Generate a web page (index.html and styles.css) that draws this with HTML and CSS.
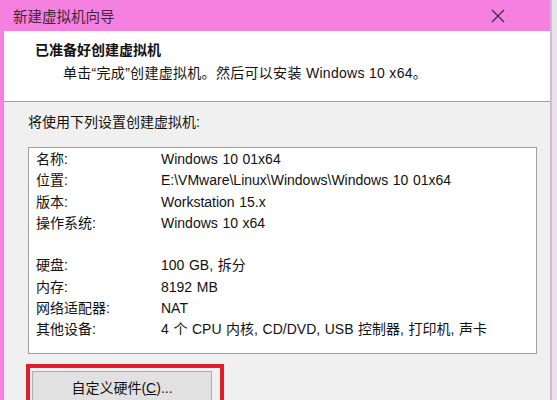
FILE: index.html
```html
<!DOCTYPE html>
<html lang="zh-CN">
<head>
    <meta charset="utf-8">
    <title>新建虚拟机向导</title>
    <meta name="viewport" content="width=device-width, initial-scale=1">
    <link rel="stylesheet" href="styles.css">
</head>
<body>
    <div class="window">
        <div class="titlebar">
            <span class="title">新建虚拟机向导</span>
            <span class="close">
                <svg width="14" height="14" viewBox="0 0 14 14">
                    <path d="M1 1 L13 13 M13 1 L1 13" stroke="#3a2a3a" stroke-width="1.2" fill="none"/>
                </svg>
            </span>
        </div>

        <div class="header">
            <div class="header-title">已准备好创建虚拟机</div>
            <div class="header-sub">单击“完成”创建虚拟机。然后可以安装 Windows 10 x64。</div>
        </div>

        <div class="content">
            <div class="prompt">将使用下列设置创建虚拟机:</div>

            <div class="summary">
                <div class="row"><span class="key">名称:</span><span class="val">Windows 10 01x64</span></div>
                <div class="row"><span class="key">位置:</span><span class="val">E:\VMware\Linux\Windows\Windows 10 01x64</span></div>
                <div class="row"><span class="key">版本:</span><span class="val">Workstation 15.x</span></div>
                <div class="row"><span class="key">操作系统:</span><span class="val">Windows 10 x64</span></div>
                <div class="row"></div>
                <div class="row"><span class="key">硬盘:</span><span class="val">100 GB, 拆分</span></div>
                <div class="row"><span class="key">内存:</span><span class="val">8192 MB</span></div>
                <div class="row"><span class="key">网络适配器:</span><span class="val">NAT</span></div>
                <div class="row"><span class="key">其他设备:</span><span class="val">4 个 CPU 内核, CD/DVD, USB 控制器, 打印机, 声卡</span></div>
            </div>

            <div class="highlight">
                <button class="btn">自定义硬件(<u>C</u>)...</button>
            </div>
        </div>
    </div>
</body>
</html>
```

FILE: styles.css
```css
:root {
    --pink: #f580e0;
    --panel: #f0f0f0;
    --line: #a0a0a0;
    --text: #111;
    --red: #de1f2b;
}

* {
    margin: 0;
    padding: 0;
    box-sizing: border-box;
}

body {
    width: 557px;
    height: 400px;
    overflow: hidden;
    background-color: #ecdff0;
    font-family: "Liberation Sans", "Noto Sans CJK SC", sans-serif;
    font-size: 14px;
    color: var(--text);
}

.window {
    width: 552px;
    height: 400px;
    border-left: 4px solid var(--pink);
    border-right: 2px solid #cbbfcd;
    background-color: var(--panel);
}

.titlebar {
    height: 31px;
    background-color: var(--pink);
    display: flex;
    align-items: center;
    justify-content: space-between;
    padding: 0 45px 0 9px;
}

.title {
    color: #3a2a38;
    font-size: 14.5px;
}

.close {
    display: flex;
}

.header {
    height: 71px;
    background-color: #fff;
    border-bottom: 1px solid var(--line);
    padding-top: 9px;
}

.header-title {
    font-weight: bold;
    line-height: 20px;
    padding-left: 31px;
}

.header-sub {
    line-height: 20px;
    margin-top: 3px;
    padding-left: 59px;
    letter-spacing: 0.3px;
}

.content {
    padding: 10px 13px 0 24px;
}

.prompt {
    line-height: 20px;
}

.summary {
    margin-top: 15px;
    background-color: #fff;
    border: 1px solid var(--line);
    padding: 1px 0 13px 7px;
}

.row {
    display: flex;
    height: 21.25px;
    line-height: 21.25px;
    white-space: nowrap;
}

.key {
    width: 125px;
}

.val {
    word-spacing: 0.7px;
}

.highlight {
    margin: 10px 0 0 -2px;
    width: 198px;
    border: 4px solid var(--red);
    border-bottom: none;
    padding: 3px 8px 0 2px;
}

.btn {
    width: 100%;
    height: 32px;
    background-color: #e1e1e1;
    border: 1px solid #adadad;
    font-family: inherit;
    font-size: 14px;
    color: var(--text);
}
```
